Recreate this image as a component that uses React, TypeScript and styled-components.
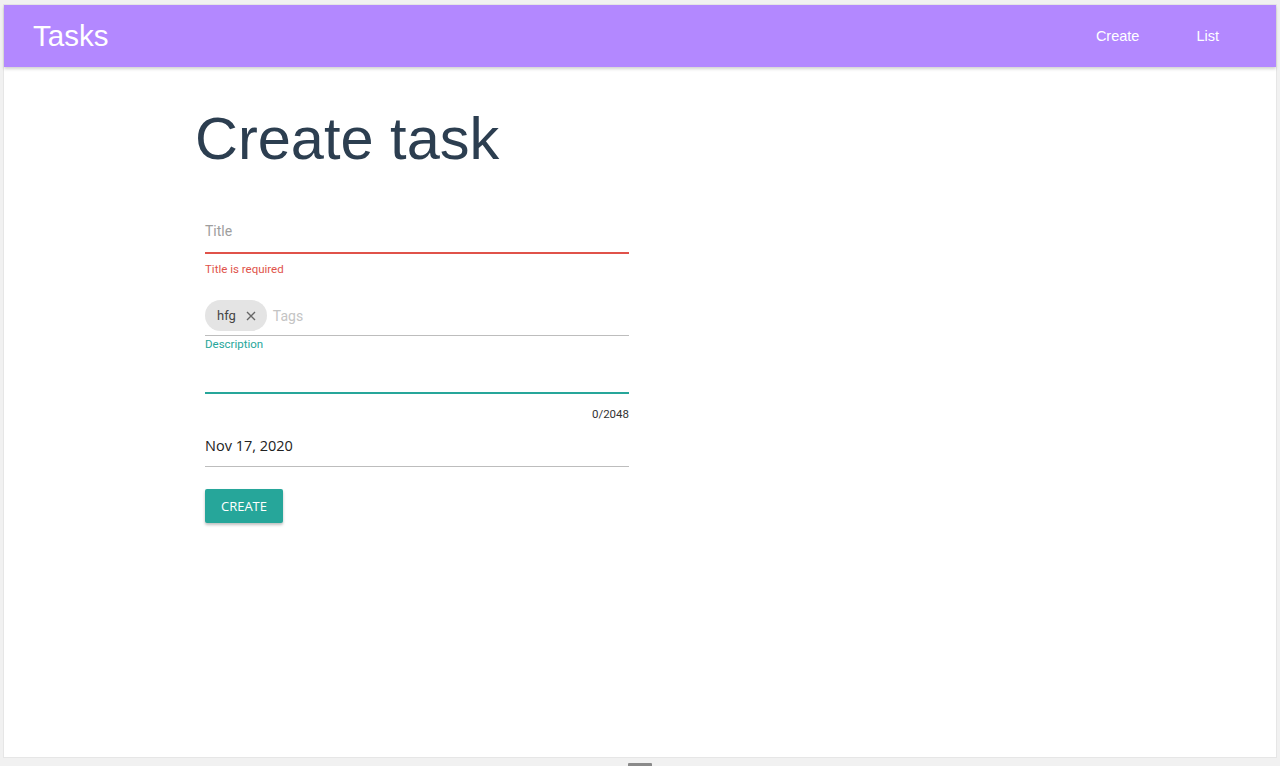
import React from "react";
import styled, { createGlobalStyle } from "styled-components";

const Global = createGlobalStyle`
  html, body { margin: 0; padding: 0; background: #f1f1f1; }
  body { font-family: Roboto, "Liberation Sans", Arial, sans-serif; }
  * { box-sizing: border-box; }
`;

const Frame = styled.div`
  width: 1280px;
  height: 766px;
  padding: 5px 4px 9px 4px;
  display: flex;
  flex-direction: column;
  position: relative;
`;

const Window = styled.div`
  flex: 1;
  background: #ffffff;
  display: flex;
  flex-direction: column;
  box-shadow: 0 0 0 1px #e6e6e6;
`;

const Header = styled.header`
  height: 62px;
  background: #b388ff;
  display: flex;
  align-items: center;
  justify-content: space-between;
  padding: 0 57px 0 29px;
  box-shadow: 0 2px 3px rgba(0, 0, 0, 0.18);
`;

const Brand = styled.div`
  font-family: "Liberation Sans", Arial, sans-serif;
  color: #ffffff;
  font-size: 29.5px;
`;

const Nav = styled.nav`
  display: flex;
  gap: 57px;
`;

const NavLink = styled.a`
  font-family: "Liberation Sans", Arial, sans-serif;
  color: #ffffff;
  font-size: 14.5px;
  text-decoration: none;
`;

const Main = styled.main`
  padding: 36px 0 0 191px;
  display: flex;
  flex-direction: column;
`;

const Heading = styled.h1`
  margin: 0;
  font-family: "Liberation Sans", Arial, sans-serif;
  font-weight: 400;
  font-size: 59.5px;
  line-height: 72px;
  color: #2c3e50;
`;

const Form = styled.form`
  width: 424px;
  margin: 38px 0 0 10px;
  display: flex;
  flex-direction: column;
`;

const Field = styled.div<{ $line: string; $thick?: boolean; $h: number }>`
  height: ${(p) => p.$h}px;
  border-bottom: ${(p) => (p.$thick ? 2 : 1)}px solid ${(p) => p.$line};
  display: flex;
  align-items: center;
  gap: 6px;
`;

const Placeholder = styled.span<{ $c: string }>`
  font-size: 14px;
  color: ${(p) => p.$c};
`;

const Helper = styled.div<{ $c: string; $right?: boolean }>`
  font-size: 11.5px;
  color: ${(p) => p.$c};
  text-align: ${(p) => (p.$right ? "right" : "left")};
  line-height: 14px;
`;

const Chip = styled.span`
  height: 31px;
  padding: 0 11px 0 12px;
  border-radius: 16px;
  background: #e4e4e4;
  display: inline-flex;
  align-items: center;
  gap: 10px;
  font-size: 13px;
  color: #444;
`;

const DateText = styled.span`
  font-family: "Open Sans", "Noto Sans", sans-serif;
  font-size: 14.5px;
  color: #222;
`;

const Button = styled.button`
  align-self: flex-start;
  width: 78px;
  height: 34px;
  border: none;
  border-radius: 2px;
  background: #26a69a;
  color: #ffffff;
  font-family: "Open Sans", "Noto Sans", sans-serif;
  font-size: 13px;
  text-transform: uppercase;
  box-shadow: 0 2px 3px rgba(0, 0, 0, 0.25);
  margin-top: 22px;
`;

const Handle = styled.div`
  position: absolute;
  left: 628px;
  bottom: 0;
  width: 24px;
  height: 3px;
  background: #8a8a8a;
  border-radius: 1px 1px 0 0;
`;

export default function App() {
  return (
    <>
      <Global />
      <Frame>
        <Window>
          <Header>
            <Brand>Tasks</Brand>
            <Nav>
              <NavLink>Create</NavLink>
              <NavLink>List</NavLink>
            </Nav>
          </Header>
          <Main>
            <Heading>Create task</Heading>
            <Form>
              <Field $line="#e0524a" $thick $h={41} style={{ paddingBottom: 4 }}>
                <Placeholder $c="#9e9e9e">Title</Placeholder>
              </Field>
              <Helper $c="#e0524a" style={{ marginTop: 8 }}>Title is required</Helper>
              <Field $line="#bdbdbd" $h={60} style={{ alignItems: "flex-end", paddingBottom: 4 }}>
                <Chip>
                  hfg
                  <svg width="10" height="10" viewBox="0 0 10 10">
                    <path d="M1 1L9 9M9 1L1 9" stroke="#666" strokeWidth="1.4" />
                  </svg>
                </Chip>
                <Placeholder $c="#c4c4c4" style={{ marginBottom: 7 }}>Tags</Placeholder>
              </Field>
              <Helper $c="#26a69a" style={{ marginTop: 1 }}>Description</Helper>
              <Field $line="#26a69a" $thick $h={43} />
              <Helper $c="#333" $right style={{ marginTop: 13 }}>0/2048</Helper>
              <Field $line="#bdbdbd" $h={46} style={{ paddingTop: 3 }}>
                <DateText>Nov 17, 2020</DateText>
              </Field>
              <Button type="button">Create</Button>
            </Form>
          </Main>
        </Window>
        <Handle />
      </Frame>
    </>
  );
}
